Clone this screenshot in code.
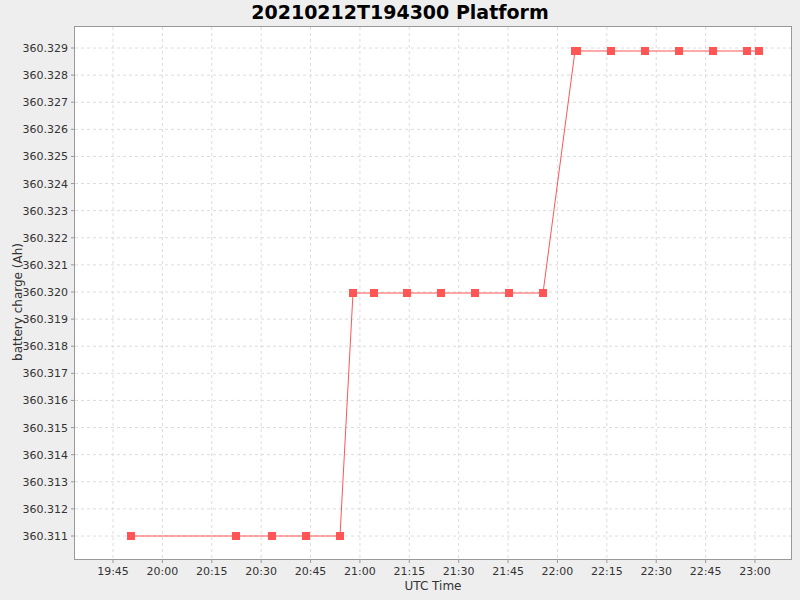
import React from "react";

const yTicks = Array.from({ length: 19 }, (_, i) => ({ y: 48 + i * (488 / 18), label: (360.329 - i * 0.001).toFixed(3) }));
const xLabels = ["19:45","20:00","20:15","20:30","20:45","21:00","21:15","21:30","21:45","22:00","22:15","22:30","22:45","23:00"];
const xTicks = xLabels.map((l, i) => ({ x: 113 + i * (642 / 13), label: l }));
const pts: [number, number][] = [
  [131,536],[236,536],[272,536],[306,536],[340,536],
  [353,293],[374,293],[407,293],[441,293],[475,293],[509,293],[543,293],
  [575,51],[577,51],[611,51],[645,51],[679,51],[713,51],[747,51],[759,51],
];

export default function App() {
  const font = "'DejaVu Sans', sans-serif";
  return (
    <div className="w-[800px] h-[600px] bg-[#eeeeee] relative overflow-hidden" style={{ fontFamily: font }}>
      <svg width="800" height="600" className="absolute left-0 top-0">
        <rect x="74.5" y="26.5" width="717" height="533" fill="#fff" stroke="#999" />
        {yTicks.map((t) => (
          <g key={t.label}>
            <line x1="75" x2="791" y1={t.y} y2={t.y} stroke="#dcdcdc" strokeDasharray="3 3" />
            <line x1="71" x2="74" y1={t.y} y2={t.y} stroke="#999" />
            <text x="68" y={t.y + 4} textAnchor="end" fontSize="11" fill="#333" fontFamily={font}>{t.label}</text>
          </g>
        ))}
        {xTicks.map((t) => (
          <g key={t.label}>
            <line x1={t.x} x2={t.x} y1="27" y2="559" stroke="#dcdcdc" strokeDasharray="3 3" />
            <line x1={t.x} x2={t.x} y1="560" y2="563" stroke="#999" />
            <text x={t.x} y="575" textAnchor="middle" fontSize="11" fill="#333" fontFamily={font}>{t.label}</text>
          </g>
        ))}
        <polyline points={pts.map((p) => p.join(",")).join(" ")} fill="none" stroke="#ff5555" strokeWidth="1" />
        {pts.map((p, i) => (
          <rect key={i} x={p[0] - 4} y={p[1] - 4} width="8" height="8" fill="#ff5555" />
        ))}
        <text x="433" y="590" textAnchor="middle" fontSize="12" fill="#333" fontFamily={font}>UTC Time</text>
        <text transform="translate(22 302) rotate(-90)" textAnchor="middle" fontSize="12" fill="#333" fontFamily={font}>battery charge (Ah)</text>
      </svg>
      <div className="absolute left-0 top-0 w-full text-center text-[19px] font-bold text-black leading-[24px]">20210212T194300 Platform</div>
    </div>
  );
}
